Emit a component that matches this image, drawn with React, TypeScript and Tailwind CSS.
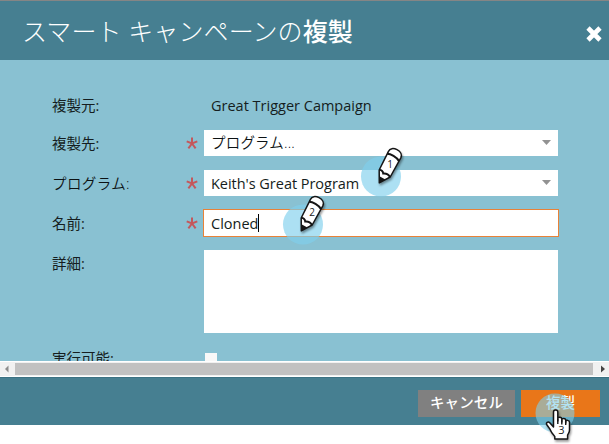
import type { ReactNode } from "react";

const JP = "font-['Open_Sans','Noto_Sans_CJK_JP',sans-serif]";

function Label({ children, kana, low }: { children: ReactNode; kana?: boolean; low?: boolean }) {
  return (
    <div className={`w-[134px] shrink-0 whitespace-nowrap text-[14.5px] ${low ? "leading-[28px]" : "leading-[27px]"} ${kana ? "font-[350] tracking-[0.4px] text-[#0c1214]" : ""}`}>
      {children}
    </div>
  );
}

function Required() {
  return (
    <svg className="mr-[6px] h-[26px] w-[12px] shrink-0" viewBox="0 0 12 26" fill="none" stroke="#c4575b" strokeWidth="2">
      <path d="M6 7.5V13.5M.7 11.3L6 13.5L11.3 11.3M6 13.5L2.4 18.3M6 13.5L9.6 18.3" />
    </svg>
  );
}

function Select({ children }: { children: ReactNode }) {
  return (
    <div className="flex h-[26px] w-[354px] items-center justify-between bg-white pl-[7px] pr-[7px]">
      {children}
      <svg className="mb-[2px] h-[5px] w-[9px]" viewBox="0 0 9 5" fill="#929292">
        <path d="M0 0h9L4.5 5z" />
      </svg>
    </div>
  );
}

function Pencil({ n }: { n: number }) {
  return (
    <svg className="h-[54px] w-[48px] overflow-visible" viewBox="0 0 48 54">
      <circle cx="20" cy="33.5" r="20" fill="#7fd0ec" fillOpacity=".65" />
      <g className="drop-shadow-[1px_2px_1px_rgba(0,0,0,0.4)]">
        <path d="M27.6 8.2C28.7 5.2 32.6 4.9 36 6.7C39.7 8.6 41.3 11.8 39.8 14.8L29.2 34L18.3 39.8L18.2 27Z" fill="#fff" stroke="#151515" strokeWidth="1.5" strokeLinejoin="round" />
        <path d="M26.2 10.8C29.8 10.8 35.5 13.8 37.9 18" fill="none" stroke="#151515" strokeWidth="2" />
        <path d="M18.2 27C20 26.5 22.2 28.3 22.2 30.5C25 30.2 27.8 31.8 29 34" fill="none" stroke="#151515" strokeWidth="1.9" />
        <path d="M18 33L24.4 36.6L18 40.3Z" fill="#151515" />
      </g>
      <text x="29" y="25" textAnchor="middle" fontSize="10" fill="#222" fontFamily="Open Sans">{n}</text>
    </svg>
  );
}

function Hand() {
  return (
    <svg className="h-[50px] w-[50px] overflow-visible" viewBox="0 0 50 50">
      <circle cx="20" cy="20" r="19.5" fill="#7fd0ec" fillOpacity=".6" />
      <g className="drop-shadow-[1px_2px_1px_rgba(0,0,0,0.4)]">
        <path d="M18.5 34V19C18.5 16.3 22.8 16.3 22.8 19V28V26C22.8 23.6 26.8 23.7 26.8 26.2V29V27C26.8 24.8 30.7 25 30.7 27.3V30V28.6C30.7 26.7 34.5 27 34.5 29.3V37C34.5 39.8 33 40.5 32.6 42.2V46H19.8V43.5C17.4 41.2 15.7 38.4 14.6 35.6L12 32C10.5 29.6 13 28 15 30Z" fill="#fff" stroke="#151515" strokeWidth="1.5" strokeLinejoin="round" />
        <path d="M22.8 26V31M26.8 27V31.5M30.7 28V32" stroke="#151515" strokeWidth="1.4" />
      </g>
      <text x="26.5" y="41" textAnchor="middle" fontSize="11" fill="#222" fontFamily="Open Sans">3</text>
    </svg>
  );
}

export default function App() {
  return (
    <div className={`relative h-[444px] w-[609px] overflow-hidden bg-white text-[#151d20] ${JP}`}>
      <header className="flex h-[60px] items-center justify-between border-t border-[#858585] bg-[#467f91] pl-[22px] pr-[7px] text-white">
        <h1 className="mt-px whitespace-nowrap text-[25px] font-light leading-[36px] tracking-[0.1px]">
          スマート キャンペーンの<span className="font-medium">複製</span>
        </h1>
        <svg className="mt-[7px] h-[16px] w-[16px]" viewBox="0 0 16 16" stroke="#fff" strokeWidth="4.6">
          <path d="M2 2L14 14M14 2L2 14" />
        </svg>
      </header>

      <main className="h-[301px] overflow-hidden bg-[#89c1d2] pl-[52px] pt-[32px] text-[14.5px]">
        <div className="flex h-[38px]">
          <Label>複製元:</Label>
          <div className="ml-[25px] leading-[27px]">Great Trigger Campaign</div>
        </div>
        <div className="flex h-[40px]">
          <Label low>複製先:</Label>
          <Required />
          <Select><span className="font-[350] tracking-[0.2px] text-[#0c1214]">プログラム...</span></Select>
        </div>
        <div className="flex h-[40px]">
          <Label kana low>プログラム:</Label>
          <Required />
          <Select><span className="pt-[2px] tracking-[-0.03px]">Keith's Great Program</span></Select>
        </div>
        <div className="flex h-[40px]">
          <Label low>名前:</Label>
          <Required />
          <div className="-ml-px -mt-px flex h-[28px] w-[356px] items-center border border-[#e88238] bg-white pl-[7px]">
            <span className="pt-[2px]">Cloned</span><span className="h-[18px] w-px bg-black" />
          </div>
        </div>
        <div className="flex h-[95px]">
          <Label low>詳細:</Label>
          <div className="ml-[18px] h-[83px] w-[354px] bg-white" />
        </div>
        <div className="flex">
          <Label low>実行可能:</Label>
          <div className="ml-[19px] mt-[8px] h-[12px] w-[12px] bg-[#f8f8f8]" />
        </div>
      </main>

      <div className="flex h-[16px] items-center border-y border-white bg-[#f1f1f1]">
        <svg className="h-[14px] w-[15px]" viewBox="0 0 15 14" fill="#8c8c8c"><path d="M8.5 3.5v7L5 7z" /></svg>
        <div className="h-[12px] w-[578px] bg-[#c1c1c1]" />
        <svg className="h-[14px] w-[16px]" viewBox="0 0 16 14" fill="#444"><path d="M8 3.5v7L12 7z" /></svg>
      </div>

      <footer className="flex h-[48px] items-center justify-end gap-[6px] border-t border-[#3b7183] bg-[#467f91] pr-[9px] text-[14.5px] text-white">
        <div className="mt-[4px] flex h-[27px] w-[97px] items-center justify-center bg-[#808080] pb-[2px] font-medium tracking-[0.1px]">キャンセル</div>
        <div className="mt-[4px] flex h-[27px] w-[79px] items-center justify-center bg-[#e97619] pb-px font-medium">複製</div>
      </footer>

      <div className="absolute left-[361px] top-[143px]"><Pencil n={1} /></div>
      <div className="absolute left-[283px] top-[191px]"><Pencil n={2} /></div>
      <div className="absolute left-[535px] top-[393px]"><Hand /></div>
    </div>
  );
}
